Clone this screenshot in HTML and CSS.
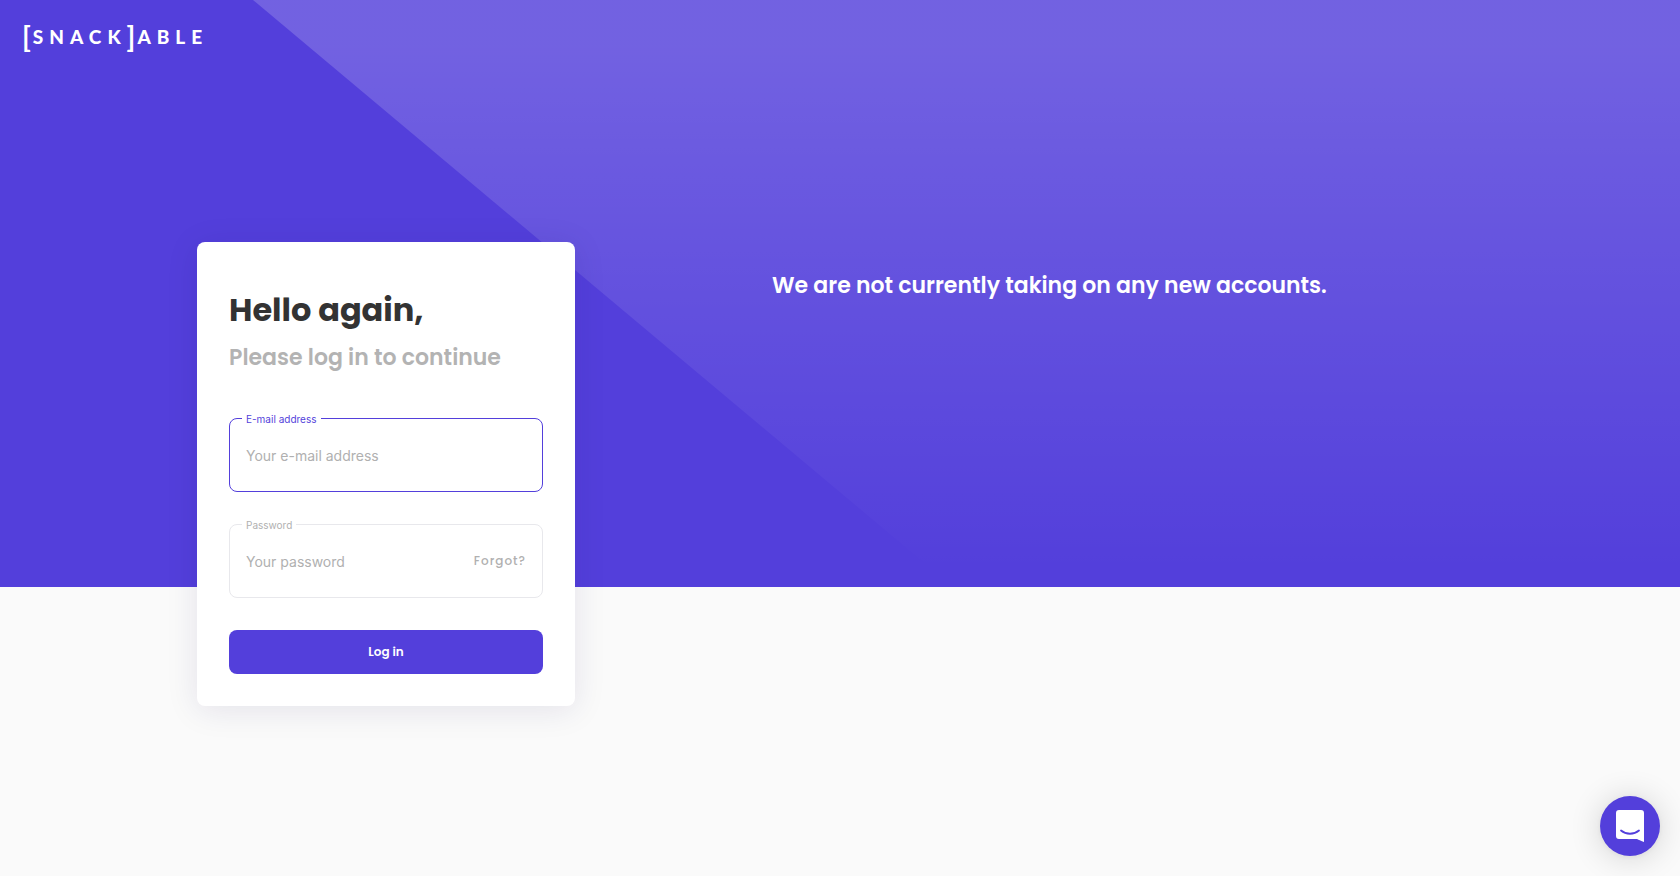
FILE: index.html
```html
<!DOCTYPE html>
<html lang="en">
<head>
    <meta charset="UTF-8">
    <meta name="viewport" content="width=device-width, initial-scale=1.0">
    <title>Snackable - Log in</title>
    <link rel="stylesheet" href="styles.css">
</head>
<body>
    <div class="hero">
        <svg class="hero-shape" viewBox="0 0 1680 587" preserveAspectRatio="none" aria-hidden="true">
            <defs>
                <linearGradient id="fade" x1="0" y1="0" x2="0" y2="1">
                    <stop offset="0.08" stop-color="#fff" stop-opacity="0.18"/>
                    <stop offset="0.97" stop-color="#fff" stop-opacity="0"/>
                </linearGradient>
            </defs>
            <path d="M253 0H1680V587H953Z" fill="url(#fade)"/>
        </svg>
    </div>
    <header class="header">
        <a class="logo" href="#"><span class="bracket">[</span><span class="word">SNACK</span><span class="bracket">]</span><span class="word">ABLE</span></a>
    </header>
    <main class="container">
        <form class="card">
            <h1>Hello again,</h1>
            <h2>Please log in to continue</h2>
            <div class="field active">
                <label for="email">E-mail address</label>
                <input type="email" id="email" placeholder="Your e-mail address">
            </div>
            <div class="field">
                <label for="password">Password</label>
                <input type="password" id="password" placeholder="Your password">
                <a class="forgot" href="#">Forgot?</a>
            </div>
            <button class="submit" type="submit">Log in</button>
        </form>
        <p class="notice">We are not currently taking on any new accounts.</p>
    </main>
    <button class="chat" type="button" aria-label="Open chat">
        <svg width="28" height="32" viewBox="0 0 28 32" aria-hidden="true">
            <path d="M3 0H25a3 3 0 0 1 3 3V32s-3-1-7-3H3a3 3 0 0 1-3-3V3a3 3 0 0 1 3-3Z" fill="#fff"/>
            <path d="M5 20.500c5 4.300 13 4.300 18 0" fill="none" stroke="#533fdb" stroke-width="1.800" stroke-linecap="round"/>
        </svg>
    </button>
</body>
</html>
```

FILE: styles.css
```css
* {
    box-sizing: border-box;
}
body {
    margin: 0;
    min-height: 100vh;
    background: #fafafa;
    font-family: Poppins, Inter, sans-serif;
    color: #333;
}
a {
    text-decoration: none;
}
/* purple backdrop behind the page */
.hero {
    position: absolute;
    top: 0;
    left: 0;
    width: 100%;
    height: 67vh;
    background: #533fdb;
}
.hero-shape {
    display: block;
    width: 100%;
    height: 100%;
}
.header {
    position: relative;
    height: 72px;
    padding: 20px 22px;
}
.logo {
    display: inline-flex;
    align-items: center;
    height: 32px;
    color: #fff;
    font-family: Lato, sans-serif;
}
.word {
    font-size: 19px;
    font-weight: 900;
    letter-spacing: 6px;
    margin-left: 2px;
}
.bracket {
    font-size: 28px;
    font-weight: 700;
    line-height: 32px;
}
.container {
    position: relative;
    display: grid;
    grid-template-columns: 378px 1fr;
    gap: 197px;
    align-items: start;
    max-width: 1286px;
    margin: 170px auto 0;
}
.card {
    padding: 48px 32px 32px;
    background: #fff;
    border-radius: 8px;
    box-shadow: 0 4px 32px rgba(30, 20, 90, 0.1);
}
h1 {
    margin: 0;
    font-size: 32px;
    font-weight: 700;
    line-height: 40px;
}
h2 {
    margin: 8px 0 40px;
    font-size: 22px;
    font-weight: 600;
    line-height: 40px;
    color: #b3b3b3;
}
.field {
    position: relative;
    display: flex;
    align-items: center;
    height: 74px;
    margin-bottom: 32px;
    padding: 0 16px;
    border: 1px solid #e8e8ec;
    border-radius: 8px;
}
.field label {
    position: absolute;
    top: -7px;
    left: 12px;
    padding: 0 4px;
    background: #fff;
    font-family: Inter, sans-serif;
    font-size: 10px;
    line-height: 14px;
    color: #b0b0b0;
}
.field input {
    flex: 1;
    min-width: 0;
    padding: 0;
    border: none;
    outline: none;
    background: none;
    font-family: Inter, sans-serif;
    font-size: 14px;
}
.field input::placeholder {
    color: #b0b0b0;
}
.field.active {
    border-color: #533fdb;
}
.field.active label {
    color: #533fdb;
}
.forgot {
    font-size: 12px;
    font-weight: 500;
    letter-spacing: 1px;
    color: #b0b0b0;
}
.submit {
    display: block;
    width: 100%;
    height: 44px;
    border: none;
    border-radius: 8px;
    background: #533fdb;
    color: #fff;
    font-family: inherit;
    font-size: 12px;
    font-weight: 600;
    cursor: pointer;
}
.notice {
    margin: 24px 0 0;
    font-size: 22px;
    font-weight: 600;
    line-height: 40px;
    color: #fff;
}
.chat {
    position: fixed;
    right: 20px;
    bottom: 20px;
    display: flex;
    justify-content: center;
    align-items: center;
    width: 60px;
    height: 60px;
    padding: 0;
    border: none;
    border-radius: 50%;
    background: #533fdb;
    box-shadow: 0 1px 6px rgba(0, 0, 0, 0.06), 0 2px 32px rgba(0, 0, 0, 0.16);
    cursor: pointer;
}
```
